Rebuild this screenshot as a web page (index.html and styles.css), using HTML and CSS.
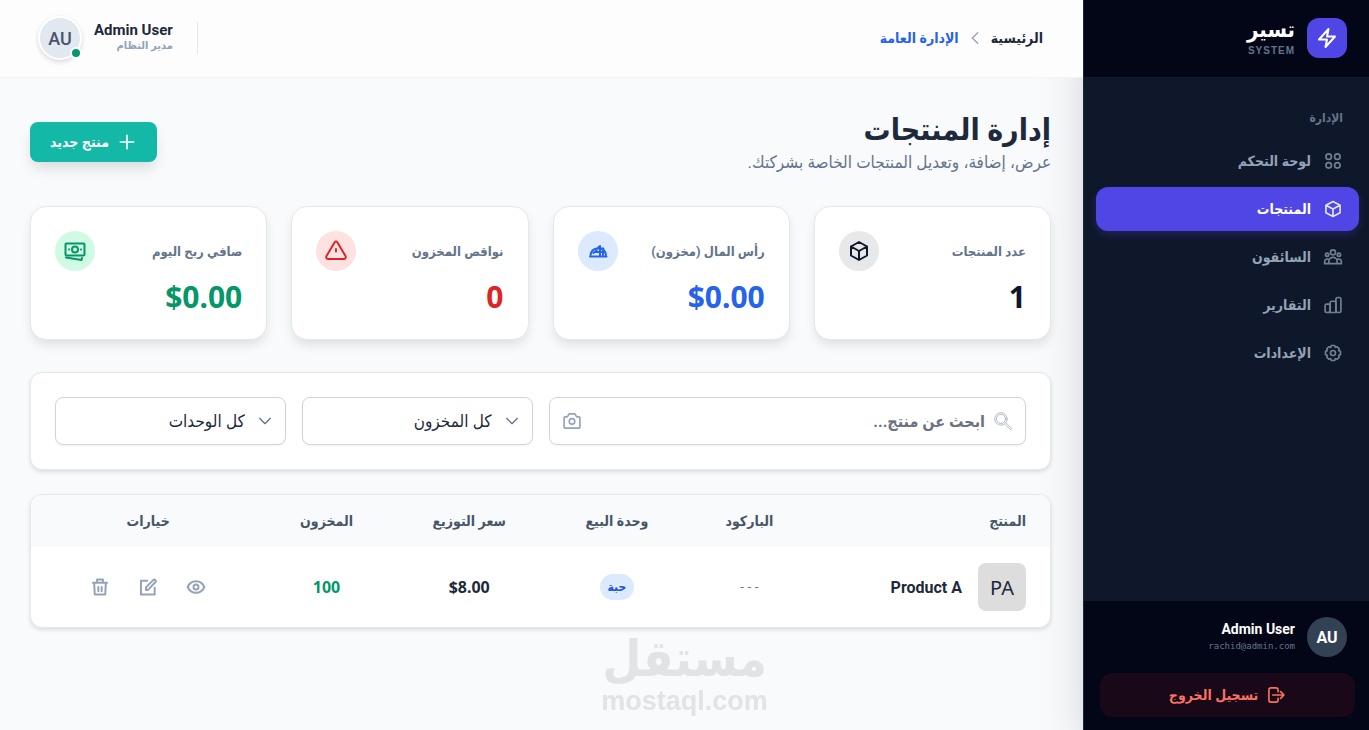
FILE: index.html
```html
<!DOCTYPE html>
<html lang="ar" dir="rtl">
<head>
    <meta charset="UTF-8">
    <meta name="viewport" content="width=device-width, initial-scale=1.0">
    <title>إدارة المنتجات</title>
    <link rel="stylesheet" href="styles.css">
</head>
<body>
    <!-- Sidebar -->
    <aside class="sidebar">
        <div class="brand">
            <span class="brand-logo">
                <svg class="icon-24" viewBox="0 0 24 24"><path d="M4 13.500 13.500 3 12 10.500h8L10.500 21 12 13.500Z"/></svg>
            </span>
            <div class="brand-text">
                <div class="brand-name">تسير</div>
                <div class="brand-sub">SYSTEM</div>
            </div>
        </div>

        <nav class="nav">
            <div class="nav-label">الإدارة</div>
            <a class="nav-item" href="#">
                <svg class="icon-20" viewBox="0 0 24 24"><circle cx="6.800" cy="6.800" r="3.300"/><circle cx="17.200" cy="6.800" r="3.300"/><circle cx="6.800" cy="17.200" r="3.300"/><circle cx="17.200" cy="17.200" r="3.300"/></svg>
                لوحة التحكم
            </a>
            <a class="nav-item active" href="#">
                <svg class="icon-20" viewBox="0 0 24 24"><path d="m20.500 7.500-8.500-4.500-8.500 4.500m17 0-8.500 4.500m8.500-4.500v9l-8.500 4.500m-8.500-13.500 8.500 4.500m-8.500-4.500v9l8.500 4.500m0-9v9"/></svg>
                المنتجات
            </a>
            <a class="nav-item" href="#">
                <svg class="icon-20" viewBox="0 0 24 24"><circle cx="12" cy="6.500" r="3"/><circle cx="4.900" cy="9.300" r="2"/><circle cx="19.100" cy="9.300" r="2"/><path d="M7 20v-2.500a5 5 0 0 1 10 0V20ZM7 20H2v-2.500a3 3 0 0 1 5-2.300M17 20h5v-2.500a3 3 0 0 0-5-2.300"/></svg>
                السائقون
            </a>
            <a class="nav-item" href="#">
                <svg class="icon-20" viewBox="0 0 24 24"><rect x="2.500" y="11" width="6" height="10" rx="2"/><path d="M8.500 20V9.500a2 2 0 0 1 2-2h3a2 2 0 0 1 2 2V21h-9"/><rect x="15.500" y="3" width="6" height="18" rx="2"/></svg>
                التقارير
            </a>
            <a class="nav-item" href="#">
                <svg class="icon-20" viewBox="0 0 24 24"><circle cx="12" cy="12" r="3"/><path d="M10 3h4l.8 2.200 2.200-.7 2.500 2.500-.7 2.200L21 10v4l-2.200.8.7 2.200-2.500 2.500-2.200-.7L14 21h-4l-.8-2.200-2.200.7L4.500 17l.7-2.200L3 14v-4l2.200-.8L4.500 7 7 4.500l2.200.7Z"/></svg>
                الإعدادات
            </a>
        </nav>

        <div class="sidebar-footer">
            <div class="account">
                <span class="account-avatar">AU</span>
                <div>
                    <div class="account-name">Admin User</div>
                    <div class="account-email">rachid@admin.com</div>
                </div>
            </div>
            <button class="logout" type="button">
                <svg class="icon-20" viewBox="0 0 24 24"><path d="M14.500 8V6a2.500 2.500 0 0 0-2.500-2.500H6A2.500 2.500 0 0 0 3.500 6v12A2.500 2.500 0 0 0 6 20.500h6a2.500 2.500 0 0 0 2.500-2.500v-2M8 12h13.500m-4-4 4 4-4 4"/></svg>
                تسجيل الخروج
            </button>
        </div>
    </aside>

    <div class="content">
        <!-- Top bar -->
        <header class="topbar">
            <nav class="breadcrumb">
                <a class="crumb" href="#">الرئيسية</a>
                <svg class="icon-16 crumb-arrow" viewBox="0 0 24 24"><path d="m16 4-8 8 8 8"/></svg>
                <a class="crumb current" href="#">الإدارة العامة</a>
            </nav>
            <div class="profile">
                <div class="profile-text">
                    <div class="profile-name">Admin User</div>
                    <div class="profile-role">مدير النظام</div>
                </div>
                <div class="profile-avatar">AU<span class="status-dot"></span></div>
            </div>
        </header>

        <main class="main">
            <div class="page-head">
                <div>
                    <h1>إدارة المنتجات</h1>
                    <p class="subtitle">عرض، إضافة، وتعديل المنتجات الخاصة بشركتك.</p>
                </div>
                <button class="btn-new" type="button">
                    <svg class="icon-20" viewBox="0 0 24 24"><path d="M12 4v16M4 12h16"/></svg>
                    منتج جديد
                </button>
            </div>

            <!-- Stats -->
            <section class="stats">
                <div class="card stat">
                    <div class="stat-top">
                        <span class="stat-label">عدد المنتجات</span>
                        <span class="stat-icon dark"><svg class="icon-24" viewBox="0 0 24 24"><path d="m20 7.500-8-4.500-8 4.500m16 0-8 4.500m8-4.500v9l-8 4.500m-8-13.500 8 4.500m-8-4.500v9l8 4.500m0-9v9"/></svg></span>
                    </div>
                    <div class="stat-value dark-text">1</div>
                </div>
                <div class="card stat">
                    <div class="stat-top">
                        <span class="stat-label">رأس المال (مخزون)</span>
                        <span class="stat-icon blue"><svg class="icon-24" viewBox="0 0 24 24"><path d="M4 17.500h16.500M4.500 16c.5-3.500 3-6 6.500-6.500h3c3.500.5 5.500 3 6 6.500M11 9.500l3-2.500v10M7.500 14l3-2.500M9.500 13H18M17 9.500V16M14 9.500h3.500"/></svg></span>
                    </div>
                    <div class="stat-value blue-text" dir="ltr">$0.00</div>
                </div>
                <div class="card stat">
                    <div class="stat-top">
                        <span class="stat-label">نواقص المخزون</span>
                        <span class="stat-icon red"><svg class="icon-24" viewBox="0 0 24 24"><path d="M12 10v2.500M10.500 3.400 2.500 17a2 2 0 0 0 1.700 3h15.600a2 2 0 0 0 1.700-3l-8-13.600a1.700 1.700 0 0 0-3 0Z"/></svg></span>
                    </div>
                    <div class="stat-value red-text">0</div>
                </div>
                <div class="card stat">
                    <div class="stat-top">
                        <span class="stat-label">صافي ربح اليوم</span>
                        <span class="stat-icon green"><svg class="icon-24" viewBox="0 0 24 24"><rect x="2.500" y="4.500" width="19" height="12" rx="1"/><circle cx="12" cy="10.500" r="3"/><path d="M6 10.500h.1M17.900 10.500h.1M3 18.500l15.500 2.500.5-2"/></svg></span>
                    </div>
                    <div class="stat-value green-text" dir="ltr">$0.00</div>
                </div>
            </section>

            <!-- Filters -->
            <section class="card filters">
                <div class="field search">
                    <svg class="icon-20 search-icon" viewBox="0 0 24 24"><circle cx="9.500" cy="9.500" r="7.500"/><circle cx="9.500" cy="9.500" r="5.500"/><path d="m14.500 16 6 6c1 .6 2.100-.5 1.500-1.500l-6-6"/></svg>
                    <input type="text" aria-label="ابحث عن منتج" placeholder="ابحث عن منتج...">
                    <button class="icon-btn scan" type="button" aria-label="مسح الباركود">
                        <svg class="icon-20" viewBox="0 0 24 24"><path d="M2.500 8a1 1 0 0 1 1-1h2.800L8.500 3.500h7L17.700 7h2.800a1 1 0 0 1 1 1v11.500a1 1 0 0 1-1 1h-17a1 1 0 0 1-1-1Z"/><circle cx="12" cy="12.500" r="3.300"/></svg>
                    </button>
                </div>
                <div class="field">
                    <select aria-label="المخزون"><option>كل المخزون</option></select>
                    <svg class="icon-16 chevron" viewBox="0 0 24 24"><path d="m4 8 8 8 8-8"/></svg>
                </div>
                <div class="field">
                    <select aria-label="الوحدات"><option>كل الوحدات</option></select>
                    <svg class="icon-16 chevron" viewBox="0 0 24 24"><path d="m4 8 8 8 8-8"/></svg>
                </div>
            </section>

            <!-- Products table -->
            <section class="card table-card">
                <table>
                    <thead>
                        <tr>
                            <th class="col-product">المنتج</th>
                            <th class="col-barcode">الباركود</th>
                            <th class="col-unit">وحدة البيع</th>
                            <th class="col-price">سعر التوزيع</th>
                            <th class="col-stock">المخزون</th>
                            <th class="col-actions">خيارات</th>
                        </tr>
                    </thead>
                    <tbody>
                        <tr>
                            <td>
                                <div class="product">
                                    <span class="product-thumb">PA</span>
                                    <span class="product-name">Product A</span>
                                </div>
                            </td>
                            <td class="barcode">---</td>
                            <td><span class="badge">حبة</span></td>
                            <td class="price" dir="ltr">$8.00</td>
                            <td class="stock">100</td>
                            <td>
                                <div class="actions">
                                    <button class="icon-btn" type="button" aria-label="عرض">
                                        <svg class="icon-20" viewBox="0 0 24 24"><path d="M2 12c2-4.700 5-7 10-7s8 2.300 10 7c-2 4.700-5 7-10 7S4 16.700 2 12Z"/><circle cx="12" cy="12" r="3"/></svg>
                                    </button>
                                    <button class="icon-btn" type="button" aria-label="تعديل">
                                        <svg class="icon-20" viewBox="0 0 24 24"><path d="M11 4.500H3.500v16.500H20V13M9.500 15.500v-3l9-9a1.400 1.400 0 0 1 2 0l.5.500a1.400 1.400 0 0 1 0 2L12 15.500Z"/></svg>
                                    </button>
                                    <button class="icon-btn" type="button" aria-label="حذف">
                                        <svg class="icon-20" viewBox="0 0 24 24"><path d="M3.500 7h17M8.500 7V3h7v4M5 7l.7 14h12.600L19 7M10 12v5M14 12v5"/></svg>
                                    </button>
                                </div>
                            </td>
                        </tr>
                    </tbody>
                </table>
            </section>
        </main>
    </div>

    <div class="watermark">
        <div class="watermark-ar">مستقل</div>
        <div class="watermark-en">mostaql.com</div>
    </div>
</body>
</html>
```
FILE: styles.css
```css
* {
    box-sizing: border-box;
}
body {
    margin: 0;
    display: flex;
    min-height: 100vh;
    background-color: #f8fafc;
    color: #1e293b;
    font-family: Roboto, "DejaVu Sans Condensed", "DejaVu Sans", sans-serif;
    font-size: 14px;
}
a {
    text-decoration: none;
}
button, input, select {
    font-family: inherit;
}
button {
    border: none;
    cursor: pointer;
}
svg {
    fill: none;
    stroke: currentColor;
    stroke-width: 2;
    stroke-linecap: round;
    stroke-linejoin: round;
    flex-shrink: 0;
}
.icon-16 {
    width: 16px;
    height: 16px;
}
.icon-20 {
    width: 20px;
    height: 20px;
}
.icon-24 {
    width: 24px;
    height: 24px;
}

/* Sidebar */
.sidebar {
    width: 286px;
    flex-shrink: 0;
    display: flex;
    flex-direction: column;
    background-color: #0f172a;
    border-left: 1px solid #1e293b;
    box-shadow: 0 25px 50px -12px rgba(0, 0, 0, 0.25);
}
.brand {
    display: flex;
    align-items: center;
    gap: 12px;
    height: 78px;
    padding: 0 22px 2px;
    background-color: #020617;
    border-bottom: 1px solid #111a2e;
}
.brand-logo {
    display: flex;
    align-items: center;
    justify-content: center;
    width: 40px;
    height: 40px;
    border-radius: 12px;
    background-color: #4f46e5;
    color: white;
}
.brand-name {
    color: white;
    font-size: 22px;
    font-weight: bold;
    line-height: 26px;
}
.brand-sub {
    color: #64748b;
    font-family: "Liberation Sans", sans-serif;
    font-size: 10px;
    font-weight: bold;
    letter-spacing: 1px;
    line-height: 16px;
}
.nav {
    flex: 1;
    display: flex;
    flex-direction: column;
    gap: 4px;
    padding: 32px 10px 16px 12px;
}
.nav-label {
    padding: 0 16px;
    margin-bottom: 9px;
    color: #64748b;
    font-size: 12px;
    font-weight: bold;
    line-height: 16px;
}
.nav-item {
    display: flex;
    align-items: center;
    gap: 12px;
    height: 44px;
    padding: 0 16px;
    border-radius: 12px;
    color: #94a3b8;
    font-size: 14px;
    font-weight: bold;
}
.nav-item svg {
    color: #718096;
}
.nav-item.active {
    background-color: #4f46e5;
    color: white;
    box-shadow: 0 4px 8px rgba(79, 70, 229, 0.25);
}
.nav-item.active svg {
    color: #e0e7ff;
}
.sidebar-footer {
    padding: 16px 14px 13px 16px;
    background-color: #020617;
}
.account {
    display: flex;
    align-items: center;
    gap: 12px;
    padding: 0 8px;
    margin-bottom: 16px;
}
.account-avatar {
    display: flex;
    align-items: center;
    justify-content: center;
    width: 40px;
    height: 40px;
    border-radius: 50%;
    background-color: #334155;
    color: white;
    font-size: 16px;
    font-weight: bold;
}
.account-name {
    color: white;
    font-size: 14px;
    font-weight: bold;
    line-height: 18px;
}
.account-email {
    color: #64748b;
    font-family: "DejaVu Sans Mono", monospace;
    font-size: 9px;
    line-height: 16px;
}
.logout {
    display: flex;
    align-items: center;
    justify-content: center;
    gap: 8px;
    width: 100%;
    height: 44px;
    border-radius: 12px;
    background-color: #180818;
    color: #f87161;
    font-size: 14px;
    font-weight: bold;
}

/* Top bar */
.content {
    flex: 1;
    min-width: 0;
}
.topbar {
    position: relative;
    display: flex;
    align-items: center;
    justify-content: space-between;
    height: 78px;
    padding: 0 40px 1px 38px;
    background-color: #fdfdfe;
    border-bottom: 1px solid #f1f3f6;
}
.breadcrumb {
    display: flex;
    align-items: center;
    gap: 8px;
}
.crumb {
    color: #1e293b;
    font-size: 14px;
    font-weight: bold;
}
.crumb.current {
    color: #2563eb;
}
.crumb-arrow {
    color: #94a3b8;
}
.profile {
    display: flex;
    align-items: center;
    gap: 12px;
}
.profile-text {
    padding-right: 24px;
    border-right: 1px solid #e2e8f0;
}
.profile-name {
    font-size: 15px;
    font-weight: bold;
    line-height: 16px;
}
.profile-role {
    color: #94a3b8;
    font-size: 11px;
    font-weight: bold;
    line-height: 16px;
}
.profile-avatar {
    position: relative;
    display: flex;
    align-items: center;
    justify-content: center;
    width: 44px;
    height: 44px;
    border: 2px solid white;
    border-radius: 50%;
    background-color: #e2e8f0;
    color: #475569;
    box-shadow: 0 2px 5px rgba(0, 0, 0, 0.15);
    font-size: 18px;
    font-weight: 500;
}
.status-dot {
    position: absolute;
    right: -2px;
    bottom: -1px;
    width: 12px;
    height: 12px;
    border: 2px solid white;
    border-radius: 50%;
    background-color: #059669;
}

/* Page */
.main {
    padding: 32px 32px 32px 30px;
}
.page-head {
    display: flex;
    align-items: center;
    justify-content: space-between;
    margin-bottom: 32px;
}
h1 {
    margin: 0;
    font-size: 30px;
    line-height: 40px;
}
.subtitle {
    margin: 0;
    color: #64748b;
    font-size: 17px;
    line-height: 24px;
}
.btn-new {
    display: flex;
    align-items: center;
    gap: 8px;
    height: 40px;
    padding: 0 20px;
    border-radius: 8px;
    background-color: #14b8a6;
    color: white;
    box-shadow: 0 8px 14px -2px rgba(0, 0, 0, 0.13);
    font-size: 14px;
    font-weight: bold;
}
.card {
    background-color: white;
    border: 1px solid #e5e7eb;
    border-radius: 12px;
    box-shadow: 0 2px 4px rgba(0, 0, 0, 0.12);
}
.stats {
    display: grid;
    grid-template-columns: repeat(4, 1fr);
    gap: 24px;
    margin-bottom: 32px;
}
.stat {
    padding: 24px;
    border-radius: 16px;
    box-shadow: 0 6px 12px -2px rgba(0, 0, 0, 0.12);
}
.stat-top {
    display: flex;
    align-items: center;
    justify-content: space-between;
    margin-bottom: 8px;
}
.stat-label {
    color: #64748b;
    font-size: 13px;
    font-weight: bold;
}
.stat-icon {
    display: flex;
    align-items: center;
    justify-content: center;
    width: 40px;
    height: 40px;
    border-radius: 50%;
}
.stat-icon.dark {
    background-color: #e7e8ea;
    color: #0f172a;
}
.stat-icon.blue {
    background-color: #dbeafe;
    color: #2563eb;
}
.stat-icon.red {
    background-color: #fee2e2;
    color: #dc2626;
}
.stat-icon.green {
    background-color: #d1fae5;
    color: #059669;
}
.stat-value {
    font-family: "Noto Sans", sans-serif;
    font-size: 30px;
    font-weight: bold;
    line-height: 36px;
    text-align: right;
}
.dark-text {
    color: #0f172a;
}
.blue-text {
    color: #2563eb;
}
.red-text {
    color: #dc2626;
}
.green-text {
    color: #059669;
}

/* Filters */
.filters {
    display: grid;
    grid-template-columns: repeat(4, 1fr);
    gap: 16px;
    padding: 24px;
    margin-bottom: 24px;
}
.field {
    position: relative;
    display: flex;
    align-items: center;
    height: 48px;
    border: 1px solid #d1d5db;
    border-radius: 8px;
    background-color: white;
    box-shadow: 0 1px 2px rgba(0, 0, 0, 0.05);
}
.search {
    grid-column: span 2;
    gap: 8px;
    padding: 0 12px;
}
.search-icon {
    color: #a3adba;
    stroke-width: 1;
}
.field input {
    flex: 1;
    min-width: 0;
    padding: 0;
    border: none;
    outline: none;
    background: none;
    font-size: 16px;
}
.field input::placeholder {
    color: #6b7280;
    font-weight: bold;
}
.field select {
    width: 100%;
    height: 100%;
    padding: 0 40px 0 12px;
    border: none;
    background: none;
    appearance: none;
    color: #1e293b;
    font-size: 17px;
}
.chevron {
    position: absolute;
    right: 12px;
    color: #64748b;
    pointer-events: none;
}
.icon-btn {
    display: flex;
    align-items: center;
    justify-content: center;
    padding: 10px;
    background: none;
    color: #94a3b8;
}
.icon-btn.scan {
    padding: 0;
}

/* Table */
.table-card {
    overflow: hidden;
}
table {
    width: 100%;
    table-layout: fixed;
    border-collapse: collapse;
}
th {
    height: 52px;
    padding: 0 24px;
    background-color: #f8fafc;
    color: #475569;
    font-size: 14px;
    white-space: nowrap;
}
td {
    height: 80px;
    padding: 0 24px;
    text-align: center;
}
.col-product {
    width: 23%;
    text-align: right;
}
.col-barcode {
    width: 13%;
}
.col-unit {
    width: 13%;
}
.col-price {
    width: 16%;
}
.col-stock {
    width: 12%;
}
.col-actions {
    width: 23%;
}
.product {
    display: flex;
    align-items: center;
    gap: 16px;
}
.product-thumb {
    display: flex;
    align-items: center;
    justify-content: center;
    width: 48px;
    height: 48px;
    border-radius: 8px;
    background-color: #dddddd;
    font-family: "Noto Sans", sans-serif;
    font-size: 20px;
}
.product-name {
    font-size: 16px;
    font-weight: bold;
    white-space: nowrap;
}
.barcode {
    color: #64748b;
    font-family: "DejaVu Sans Mono", monospace;
    font-size: 12px;
}
.badge {
    display: inline-block;
    padding: 0 8px;
    border-radius: 13px;
    background-color: #dbeafe;
    color: #1d4ed8;
    font-size: 12px;
    font-weight: bold;
    line-height: 26px;
}
.price, .stock {
    font-family: "Noto Sans", sans-serif;
    font-size: 16px;
    font-weight: bold;
}
.stock {
    color: #059669;
}
.actions {
    display: flex;
    justify-content: center;
    gap: 8px;
}
.actions svg {
    stroke-width: 2.4;
}

/* Watermark */
.watermark {
    position: fixed;
    right: 0;
    bottom: 14px;
    left: 0;
    color: #e1e3e5;
    text-align: center;
    pointer-events: none;
}
.watermark-ar {
    font-size: 50px;
    font-weight: bold;
    line-height: 54px;
}
.watermark-en {
    font-family: "Liberation Sans", sans-serif;
    font-size: 27px;
    font-weight: bold;
    line-height: 30px;
}
```
